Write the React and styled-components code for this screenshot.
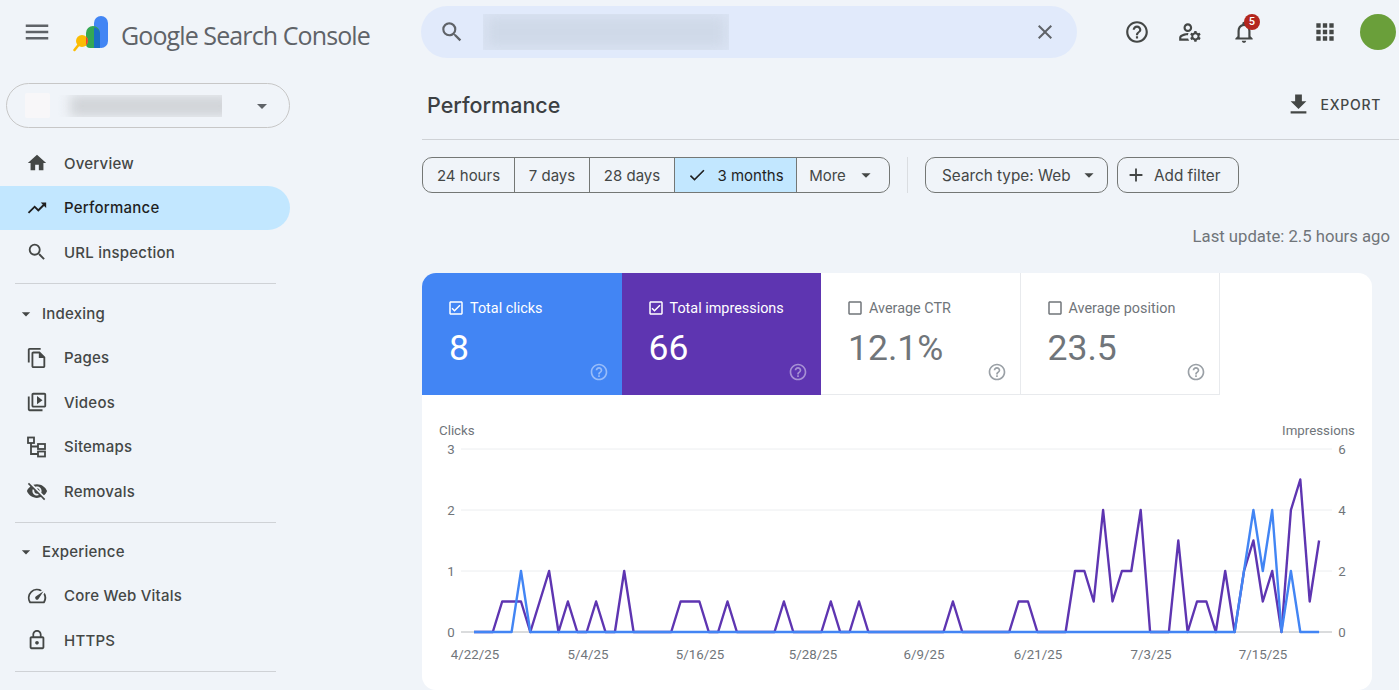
import React from 'react';
import styled, { createGlobalStyle } from 'styled-components';
import {
  MdMenu, MdSearch, MdClose, MdHelpOutline, MdOutlineManageAccounts, MdOutlineNotifications, MdApps,
  MdArrowDropDown, MdHome, MdTrendingUp, MdOutlineFileCopy, MdOutlineVideoLibrary, MdVisibilityOff,
  MdOutlineSpeed, MdLockOutline, MdFileDownload, MdCheck, MdAdd, MdOutlineCheckBox, MdCheckBoxOutlineBlank,
} from 'react-icons/md';

const GlobalStyle = createGlobalStyle`
  html, body {
    margin: 0;
    height: 690px;
    overflow: hidden;
    background: #f0f4f9;
    font-family: Inter, 'Liberation Sans', sans-serif;
    color: #444746;
  }
  * { box-sizing: border-box; }
`;

const Page = styled.div`
  width: 1399px;
  height: 690px;
  overflow: hidden;
`;

const Header = styled.header`
  display: flex;
  align-items: center;
  height: 64px;
`;

const Brand = styled.div`
  display: flex;
  align-items: center;
  width: 421px;
  flex: none;
  height: 100%;
  padding-left: 22px;
  color: #5f6368;
`;

const LogoMark = styled.svg`
  display: block;
  margin: 4px 0 0 21px;
`;

const LogoText = styled.span`
  margin: 6px 0 0 10px;
  font-family: 'Open Sans', sans-serif;
  font-size: 25px;
  letter-spacing: -0.9px;
  white-space: nowrap;
`;

const Search = styled.div`
  display: flex;
  align-items: center;
  width: 656px;
  height: 52px;
  padding: 0 20px 0 18px;
  border-radius: 26px;
  background: #e1eafb;
  color: #5f6368;
`;

const BlurClip = styled.div`
  overflow: hidden;
  flex: none;
  width: ${(p) => p.$w}px;
  height: ${(p) => p.$h}px;
  margin-left: ${(p) => p.$ml}px;
  background: ${(p) => p.$bg || 'transparent'};
`;

const BlurFill = styled.div`
  height: ${(p) => p.$h}px;
  margin: ${(p) => p.$m};
  background: ${(p) => p.$c};
  filter: blur(6px);
`;

const SearchGap = styled.div`
  flex: 1;
`;

const Tools = styled.div`
  display: flex;
  align-items: center;
  padding-left: 33px;
`;

const ToolIcon = styled.div`
  position: relative;
  display: flex;
  justify-content: center;
  align-items: center;
  width: 53.5px;
  color: #444746;
  margin-left: ${(p) => p.$ml || 0}px;
`;

const Badge = styled.span`
  position: absolute;
  top: -5px;
  left: 27px;
  width: 16px;
  height: 16px;
  border-radius: 50%;
  background: #b3261e;
  color: #fff;
  font: 500 11px/16px Roboto, sans-serif;
  text-align: center;
`;

const Avatar = styled.div`
  width: 36px;
  height: 36px;
  margin-left: 8px;
  border-radius: 50%;
  background: #6a9f3a;
`;

const Body = styled.div`
  display: flex;
`;

const Sidebar = styled.aside`
  width: 290px;
  flex: none;
  margin-right: 132px;
`;

const Property = styled.div`
  display: flex;
  align-items: center;
  height: 45px;
  margin: 19px 0 13px 6px;
  width: 284px;
  padding-left: 18px;
  border: 1px solid #c7c7c7;
  border-radius: 23px;
  color: #5f6368;
`;

const Favicon = styled.div`
  width: 25px;
  height: 25px;
  flex: none;
  background: #f8f7f9;
  border-radius: 2px;
`;

const PropertyCaret = styled.div`
  display: flex;
  margin-left: 28px;
`;

const NavItem = styled.div`
  display: flex;
  align-items: center;
  height: 44.5px;
  padding-left: 26px;
  gap: 16px;
  width: 290px;
  font-size: 15px;
  font-weight: 500;
  letter-spacing: 0.22px;
  color: ${(p) => (p.$active ? '#1f1f1f' : '#444746')};
  background: ${(p) => (p.$active ? '#c2e7ff' : 'transparent')};
  border-radius: 0 22px 22px 0;
`;

const SectionTitle = styled.div`
  display: flex;
  align-items: center;
  height: 44px;
  padding-left: 16px;
  gap: 6px;
  font-size: 15px;
  font-weight: 500;
  letter-spacing: 0.22px;
`;

const Rule = styled.hr`
  width: 261px;
  height: 1px;
  margin: 8px 0 ${(p) => p.$mb || 8}px 15px;
  border: 0;
  background: #cfd2d6;
`;

const Main = styled.main`
  flex: 1;
  min-width: 0;
`;

const TitleBar = styled.div`
  display: flex;
  align-items: center;
  justify-content: space-between;
  height: 76px;
  padding: 16px 18px 9px 5px;
  border-bottom: 1px solid #cfd2d6;
`;

const Title = styled.h1`
  margin: 0;
  font-size: 21.5px;
  font-weight: 500;
  color: #3c4043;
`;

const Export = styled.div`
  display: flex;
  align-items: center;
  gap: 9px;
  margin-bottom: 2px;
  font-size: 14px;
  font-weight: 500;
  letter-spacing: 0.7px;
  color: #444746;
`;

const Filters = styled.div`
  display: flex;
  align-items: center;
  margin-top: 17px;
`;

const Segments = styled.div`
  display: flex;
  height: 36px;
  border: 1px solid #747775;
  border-radius: 10px;
  overflow: hidden;
`;

const Segment = styled.div`
  display: flex;
  align-items: center;
  justify-content: center;
  width: ${(p) => p.$w}px;
  gap: ${(p) => p.$gap || 0}px;
  border-left: ${(p) => (p.$first ? 0 : '1px solid #747775')};
  background: ${(p) => (p.$active ? '#c2e7ff' : 'transparent')};
  color: ${(p) => (p.$active ? '#1f1f1f' : '#444746')};
  font-size: 15px;
`;

const VRule = styled.div`
  width: 1px;
  height: 36px;
  margin: 0 17px;
  background: #dadde1;
`;

const Chip = styled.div`
  display: flex;
  align-items: center;
  height: 36px;
  width: ${(p) => p.$w}px;
  margin-right: 9px;
  padding-left: ${(p) => p.$pl}px;
  gap: ${(p) => p.$gap}px;
  border: 1px solid #747775;
  border-radius: 10px;
  font-size: 15.3px;
  white-space: nowrap;
  color: #444746;
`;

const LastUpdate = styled.div`
  margin-top: 34px;
  padding-right: 9px;
  text-align: right;
  font: 16.7px/20px Roboto, sans-serif;
  color: #70757a;
`;

const Card = styled.section`
  width: 950px;
  height: 417px;
  margin-top: 26px;
  background: #fff;
  border-radius: 14px;
  overflow: hidden;
  font-family: Roboto, sans-serif;
`;

const Tabs = styled.div`
  display: flex;
  height: 122px;
`;

const Tab = styled.div`
  width: 199.5px;
  height: 122px;
  padding: 25px 13px 0 25px;
  background: ${(p) => p.$bg || '#fff'};
  color: ${(p) => (p.$bg ? '#fff' : '#70757a')};
  border-right: ${(p) => (p.$bg ? 0 : '1px solid #e8eaed')};
  border-bottom: ${(p) => (p.$bg ? 0 : '1px solid #e8eaed')};
`;

const TabLabel = styled.div`
  display: flex;
  align-items: center;
  gap: 5px;
  height: 20px;
  font-size: 14.4px;
  color: ${(p) => (p.$on ? '#fff' : '#70757a')};
`;

const ValueRow = styled.div`
  display: flex;
  justify-content: space-between;
  margin-top: 10px;
`;

const Value = styled.div`
  padding-left: 2px;
  font-size: 35.5px;
  line-height: 40px;
  color: ${(p) => (p.$on ? '#fff' : '#70757a')};
`;

const TabHelp = styled.div`
  display: flex;
  margin-top: 34px;
  color: ${(p) => (p.$on ? 'rgba(255,255,255,.45)' : '#9aa0a6')};
`;

const ChartSvg = styled.svg`
  display: block;
  font-family: Roboto, sans-serif;
  font-size: 13.3px;
  fill: #70757a;
`;

const Series = styled.polyline`
  fill: none;
  stroke: ${(p) => p.$c};
  stroke-width: 2.4;
  stroke-linejoin: round;
`;

// impressions by day index, everything not listed is 0
const impressions = {
  3: 1, 4: 1, 5: 1, 7: 1, 8: 2, 10: 1, 13: 1, 16: 2, 22: 1, 23: 1, 24: 1, 27: 1, 33: 1, 38: 1, 41: 1, 51: 1, 58: 1, 59: 1,
  64: 2, 65: 2, 66: 1, 67: 4, 68: 1, 69: 2, 70: 2, 71: 4, 75: 3, 77: 1, 78: 1, 80: 2, 82: 2, 83: 3, 84: 1, 85: 2,
  87: 4, 88: 5, 89: 1, 90: 3,
};
const clicks = { 5: 1, 82: 1, 83: 2, 84: 1, 85: 2, 87: 1 };

const X0 = 52;
const STEP = 9.39;
const Y0 = 237;

const points = (data, unit) =>
  Array.from({ length: 91 }, (_, i) => `${(X0 + i * STEP).toFixed(1)},${(Y0 - (data[i] || 0) * unit).toFixed(1)}`).join(' ');

const dates = [
  ['4/22/25', 53], ['5/4/25', 166], ['5/16/25', 278], ['5/28/25', 391], ['6/9/25', 502], ['6/21/25', 616], ['7/3/25', 729], ['7/15/25', 841],
];

const Chart = () => (
  <ChartSvg width="950" height="295" viewBox="0 0 950 295">
    <text x="17" y="40">Clicks</text>
    <text x="933" y="40" textAnchor="end">Impressions</text>
    {[0, 1, 2, 3].map((n) => (
      <g key={n}>
        <line x1="39" x2="910" y1={Y0 - n * 61} y2={Y0 - n * 61} stroke={n === 0 ? '#b5b8bb' : '#eceef0'} />
        <text x="29" y={Y0 - n * 61 + 5} textAnchor="middle">{n}</text>
        <text x="920" y={Y0 - n * 61 + 5} textAnchor="middle">{n * 2}</text>
      </g>
    ))}
    <Series $c="#5e35b1" points={points(impressions, 30.5)} />
    <Series $c="#4285f4" points={points(clicks, 61)} />
    {dates.map(([d, x]) => (
      <text key={d} x={x} y="264" textAnchor="middle">{d}</text>
    ))}
  </ChartSvg>
);

const Logo = () => (
  <LogoMark width="38" height="36" viewBox="0 0 38 36">
    <rect x="21" y="0" width="14" height="32" rx="7" fill="#4285f4" />
    <path d="M13 17a7 7 0 0 1 14 0v15h-10a4 4 0 0 1-4-4z" fill="#34a853" />
    <path d="M21 11.500a7 7 0 0 1 6 5.500v15h-6z" fill="#1a6fc4" />
    <path d="M5.500 29l-4 5" stroke="#fbbc04" strokeWidth="2.500" strokeLinecap="round" />
    <circle cx="9" cy="25" r="6" fill="#fbbc04" />
    <path d="M13 20.600a6 6 0 0 1 0 8.800z" fill="#ea4335" />
  </LogoMark>
);

const SitemapIcon = () => (
  <svg width="22" height="22" viewBox="0 0 22 22" fill="none" stroke="currentColor" strokeWidth="1.800">
    <rect x="2" y="1.500" width="6" height="5.500" />
    <rect x="12" y="8" width="7" height="5" />
    <rect x="12" y="15.500" width="7" height="5" />
    <path d="M5 7v11h7M5 10.500h7" />
  </svg>
);

const nav1 = [
  { label: 'Overview', icon: <MdHome size={22} /> },
  { label: 'Performance', icon: <MdTrendingUp size={22} />, active: true },
  { label: 'URL inspection', icon: <MdSearch size={22} /> },
];
const nav2 = [
  { label: 'Pages', icon: <MdOutlineFileCopy size={22} /> },
  { label: 'Videos', icon: <MdOutlineVideoLibrary size={22} /> },
  { label: 'Sitemaps', icon: <SitemapIcon /> },
  { label: 'Removals', icon: <MdVisibilityOff size={22} /> },
];
const nav3 = [
  { label: 'Core Web Vitals', icon: <MdOutlineSpeed size={22} /> },
  { label: 'HTTPS', icon: <MdLockOutline size={22} /> },
];

const NavList = ({ items }) =>
  items.map((item) => (
    <NavItem key={item.label} $active={item.active}>
      {item.icon}
      {item.label}
    </NavItem>
  ));

const segments = [
  { label: '24 hours', w: 91, first: true },
  { label: '7 days', w: 75 },
  { label: '28 days', w: 85 },
];

const stats = [
  { label: 'Total clicks', value: '8', bg: '#4285f4' },
  { label: 'Total impressions', value: '66', bg: '#5e35b1' },
  { label: 'Average CTR', value: '12.1%' },
  { label: 'Average position', value: '23.5' },
];

const App = () => (
  <Page>
    <GlobalStyle />
    <Header>
      <Brand>
        <MdMenu size={30} />
        <Logo />
        <LogoText>Google Search Console</LogoText>
      </Brand>
      <Search>
        <MdSearch size={26} />
        <BlurClip $w={246} $h={36} $ml={18} $bg="#dbe4f4">
          <BlurFill $c="#cfd9e8" $h={30} $m="3px 4px" />
        </BlurClip>
        <SearchGap />
        <MdClose size={24} />
      </Search>
      <Tools>
        <ToolIcon><MdHelpOutline size={26} /></ToolIcon>
        <ToolIcon><MdOutlineManageAccounts size={26} /></ToolIcon>
        <ToolIcon>
          <MdOutlineNotifications size={26} />
          <Badge>5</Badge>
        </ToolIcon>
        <ToolIcon $ml={28}><MdApps size={26} /></ToolIcon>
        <Avatar />
      </Tools>
    </Header>
    <Body>
      <Sidebar>
        <Property>
          <Favicon />
          <BlurClip $w={172} $h={22} $ml={0}>
            <BlurFill $c="#d1d4d8" $h={22} $m="0 -10px 0 20px" />
          </BlurClip>
          <PropertyCaret><MdArrowDropDown size={24} /></PropertyCaret>
        </Property>
        <NavList items={nav1} />
        <Rule />
        <SectionTitle><MdArrowDropDown size={20} />Indexing</SectionTitle>
        <NavList items={nav2} />
        <Rule $mb={7} />
        <SectionTitle><MdArrowDropDown size={20} />Experience</SectionTitle>
        <NavList items={nav3} />
        <Rule />
      </Sidebar>
      <Main>
        <TitleBar>
          <Title>Performance</Title>
          <Export><MdFileDownload size={27} />EXPORT</Export>
        </TitleBar>
        <Filters>
          <Segments>
            {segments.map((s) => (
              <Segment key={s.label} $w={s.w} $first={s.first}>{s.label}</Segment>
            ))}
            <Segment $w={122} $gap={10} $active><MdCheck size={20} />3 months</Segment>
            <Segment $w={93} $gap={9}>More<MdArrowDropDown size={22} /></Segment>
          </Segments>
          <VRule />
          <Chip $w={183} $pl={16} $gap={7}>Search type: Web<MdArrowDropDown size={22} /></Chip>
          <Chip $w={122} $pl={7} $gap={7}><MdAdd size={22} />Add filter</Chip>
        </Filters>
        <LastUpdate>Last update: 2.5 hours ago</LastUpdate>
        <Card>
          <Tabs>
            {stats.map((s) => (
              <Tab key={s.label} $bg={s.bg}>
                <TabLabel $on={!!s.bg}>
                  {s.bg ? <MdOutlineCheckBox size={18} /> : <MdCheckBoxOutlineBlank size={18} />}
                  {s.label}
                </TabLabel>
                <ValueRow>
                  <Value $on={!!s.bg}>{s.value}</Value>
                  <TabHelp $on={!!s.bg}><MdHelpOutline size={20} /></TabHelp>
                </ValueRow>
              </Tab>
            ))}
          </Tabs>
          <Chart />
        </Card>
      </Main>
    </Body>
  </Page>
);

export default App;
